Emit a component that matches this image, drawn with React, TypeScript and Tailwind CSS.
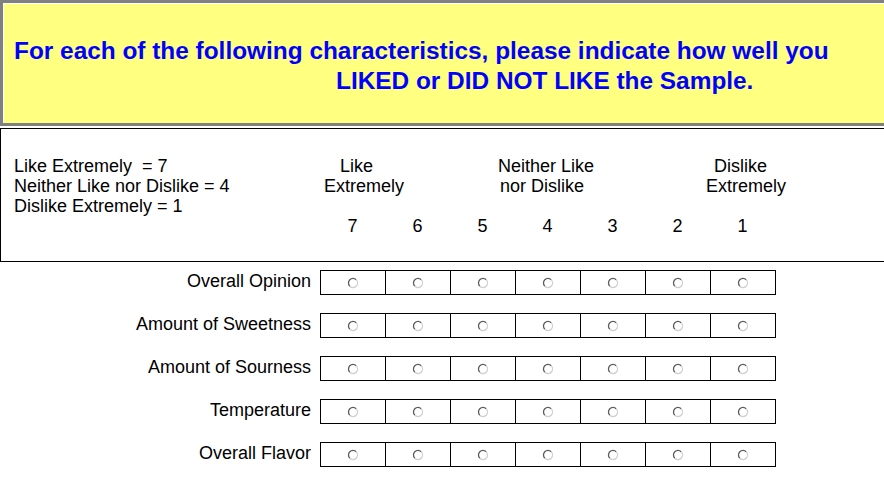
import React from 'react';

const rows = ['Overall Opinion', 'Amount of Sweetness', 'Amount of Sourness', 'Temperature', 'Overall Flavor'];
const scale = [7, 6, 5, 4, 3, 2, 1];

// classic sunken radio button
const Radio = () => (
  <svg width="12" height="12" viewBox="0 0 12 12">
    <circle cx="6" cy="6" r="4.5" fill="#ffffff" />
    <path d="M9.2 2.8 A4.5 4.5 0 0 0 2.8 9.2" fill="none" stroke="#5a5a5a" strokeWidth="1.3" />
    <path d="M2.8 9.2 A4.5 4.5 0 0 0 9.2 2.8" fill="none" stroke="#d0d0d0" strokeWidth="1.3" />
  </svg>
);

const App: React.FC = () => {
  return (
    <div className="w-[884px] h-[496px] overflow-hidden bg-white font-['Liberation_Sans',Arial,sans-serif] text-black">
      {/* Instructions banner */}
      <div className="h-[126px] border-t-[3px] border-l-[3px] border-b-[3px] border-[#808080]">
        <div className="h-full border-t border-l border-white bg-[#ffff80] pl-[10px] pt-[32px] text-[24.4px] font-bold leading-[30px] text-[#0000ff] whitespace-nowrap">
          <div>For each of the following characteristics, please indicate how well you</div>
          <div className="pl-[322px]">LIKED or DID NOT LIKE the Sample.</div>
        </div>
      </div>

      {/* Scale legend */}
      <div className="mt-[2px] h-[134px] border-t border-l border-b border-black flex text-[18px] leading-[20px] whitespace-nowrap">
        <div className="w-[319px] pl-[13px] pt-[27px]">
          <div>Like Extremely &nbsp;= 7</div>
          <div>Neither Like nor Dislike = 4</div>
          <div>Dislike Extremely = 1</div>
        </div>
        <div className="pt-[27px]">
          <div className="flex">
            <div className="w-[174px]">
              <div className="pl-[20px]">Like</div>
              <div className="pl-[4px]">Extremely</div>
            </div>
            <div className="w-[206px]">
              <div className="pl-[4px]">Neither Like</div>
              <div className="pl-[6px]">nor Dislike</div>
            </div>
            <div>
              <div className="pl-[14px]">Dislike</div>
              <div className="pl-[6px]">Extremely</div>
            </div>
          </div>
          <div className="mt-[20px] grid grid-cols-[repeat(7,65px)]">
            {scale.map((n) => (
              <div key={n} className="text-center">{n}</div>
            ))}
          </div>
        </div>
      </div>

      {/* Rating rows */}
      <div className="mt-[8px] flex flex-col gap-[18px] text-[18px] leading-[20px]">
        {rows.map((label) => (
          <div key={label} className="flex items-center">
            <div className="w-[320px] pr-[9px] pb-[3px] text-right whitespace-nowrap">{label}</div>
            <div className="w-[456px] h-[25px] flex border border-black">
              {scale.map((n, i) => (
                <div
                  key={n}
                  className={`h-full flex items-center justify-center ${i === 0 ? 'w-[64px]' : 'w-[65px] border-l border-black'}`}
                >
                  <Radio />
                </div>
              ))}
            </div>
          </div>
        ))}
      </div>
    </div>
  );
};

export default App;
